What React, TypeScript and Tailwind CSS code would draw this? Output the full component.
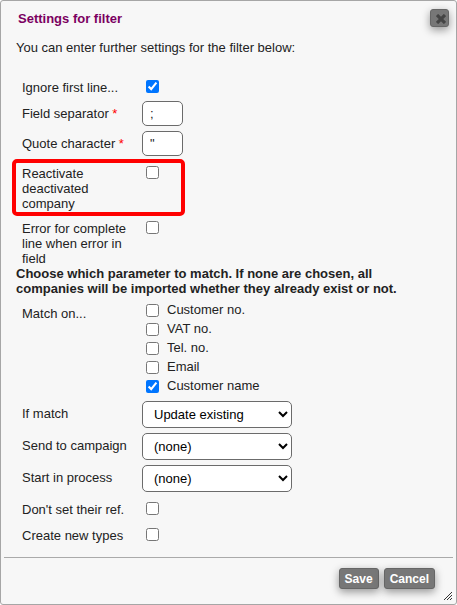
import { useId, useState } from 'react';
import type { ReactNode } from 'react';

const matchFields = ['Customer no.', 'VAT no.', 'Tel. no.', 'Email', 'Customer name'];

const actions = [
  { name: 'If match', options: ['Update existing', 'Skip'] },
  { name: 'Send to campaign', options: ['(none)'] },
  { name: 'Start in process', options: ['(none)'] },
];

const buttonClass = 'rounded-[3px] border border-[#666] bg-[#777] font-bold text-white shadow-[0_3px_8px_rgba(0,0,0,0.4)]';

function Checkbox({ id, defaultChecked }: { id: string; defaultChecked?: boolean }) {
  return <input id={id} type="checkbox" defaultChecked={defaultChecked} className="block size-[13px] shrink-0 accent-[#0075ff]" />;
}

function CheckRow({ name, checked, className = 'pb-1.5' }: { name: string; checked?: boolean; className?: string }) {
  const id = useId();
  return (
    <div className={`flex items-start pt-[5px] ${className}`}>
      <div className="w-[124px] shrink-0 pr-3">
        <label htmlFor={id} className="block">{name}</label>
      </div>
      <Checkbox id={id} defaultChecked={checked} />
    </div>
  );
}

function Required({ children }: { children: ReactNode }) {
  return <span className="text-[#f00]">{children}</span>;
}

function TextRow({ name, value }: { name: string; value: string }) {
  const id = useId();
  return (
    <div className="flex items-center pb-[5px]">
      <label htmlFor={id} className="w-[120px] shrink-0">{name} <Required>*</Required></label>
      <input id={id} type="text" defaultValue={value} className="h-[25px] w-[41px] rounded-[5px] border border-[#6b6b6b] bg-white px-[7px]" />
    </div>
  );
}

function SelectRow({ name, options }: { name: string; options: string[] }) {
  const id = useId();
  return (
    <div className="flex items-center">
      <label htmlFor={id} className="w-[120px] shrink-0 pb-0.5">{name}</label>
      <select id={id} className="h-[27px] w-[150px] rounded-[5px] border border-[#6b6b6b] bg-white px-[7px] text-black">
        {options.map((o) => <option key={o}>{o}</option>)}
      </select>
    </div>
  );
}

export default function App() {
  const [matchOn, setMatchOn] = useState<string[]>(['Customer name']);

  const toggle = (name: string) => setMatchOn((m) => (m.includes(name) ? m.filter((n) => n !== name) : [...m, name]));

  return (
    <form
      onSubmit={(e) => e.preventDefault()}
      className="relative w-full rounded-[3px] border border-[#a6a6a6] bg-[#f7f7f7] font-['Liberation_Sans',Arial,sans-serif] text-[13px] leading-[15px] text-[#222]"
    >
      <header className="flex items-start justify-between pt-2 pr-[7px] pl-[17px]">
        <h1 className="pt-0.5 font-bold text-[#7b0061]">Settings for filter</h1>
        <button type="button" aria-label="Close" className={`${buttonClass} flex h-[18px] w-[19px] items-center justify-center pt-0.5 pl-0.5`}>
          <svg viewBox="0 0 10 10" className="size-[10px]" stroke="#444" strokeWidth="3.2">
            <path d="M1 1L9 9M9 1L1 9" />
          </svg>
        </button>
      </header>

      <main className="px-[15px] pt-[13px]">
        <p>You can enter further settings for the filter below:</p>

        <div className="pt-5 pl-1.5">
          <CheckRow name="Ignore first line..." checked />
          <TextRow name="Field separator" value=";" />
          <TextRow name="Quote character" value={'"'} />
          <div className="relative">
            <CheckRow name="Reactivate deactivated company" className="pb-[5px]" />
            <div className="pointer-events-none absolute -top-0.5 bottom-0 -left-2.5 w-[173px] rounded-[5px] border-4 border-[#f00]" />
          </div>
          <CheckRow name="Error for complete line when error in field" className="pb-0" />
        </div>

        <p className="font-bold">Choose which parameter to match. If none are chosen, all companies will be imported whether they already exist or not.</p>

        <fieldset className="flex pt-[5px] pl-1.5" aria-labelledby="match-on">
          <div id="match-on" className="w-[124px] shrink-0 pt-[5px]">Match on...</div>
          <div>
            {matchFields.map((name) => (
              <label key={name} className="flex h-[19px] items-center gap-2">
                <input type="checkbox" checked={matchOn.includes(name)} onChange={() => toggle(name)} className="size-[13px] accent-[#0075ff]" />
                <span className="pb-0.5">{name}</span>
              </label>
            ))}
          </div>
        </fieldset>

        <div className="flex flex-col gap-[5px] py-[5px] pl-1.5">
          {actions.map((a) => <SelectRow key={a.name} name={a.name} options={a.options} />)}
        </div>

        <div className="pl-1.5">
          <CheckRow name="Don't set their ref." />
          <CheckRow name="Create new types" />
        </div>
      </main>

      <footer className="mx-[3px] mt-2 flex justify-end gap-[5px] border-t border-[#aaa] pt-2.5 pr-[18px] pb-[15px] text-xs">
        <button type="submit" className={`${buttonClass} h-[21px] px-[5px]`}>Save</button>
        <button type="button" className={`${buttonClass} h-[21px] px-[5px]`}>Cancel</button>
      </footer>

      <svg viewBox="0 0 8 8" className="absolute right-1 bottom-1 size-2" stroke="#333" strokeWidth="1">
        <path d="M0 8L8 0M3 8L8 3M6 8L8 6" />
      </svg>
    </form>
  );
}
